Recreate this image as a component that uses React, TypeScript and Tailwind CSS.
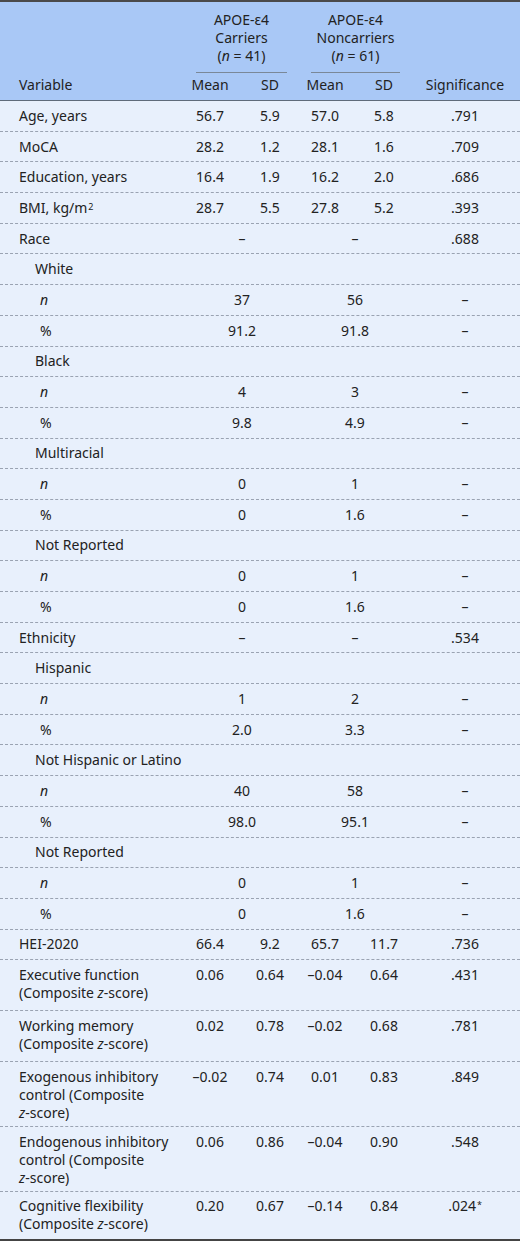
import React from 'react';

type Row = {
  label: React.ReactNode;
  indent?: number;
  lines?: number;
  cells?: [string, string, string, string];
  span?: [string, string];
  sig?: React.ReactNode;
  last?: boolean;
};

const GRID = 'grid grid-cols-[182px_56px_64px_46px_66px_106px]';

const sub = (kind: 'n' | '%', a: string, b: string): Row => ({
  label: kind === 'n' ? <i>n</i> : '%',
  indent: 2,
  span: [a, b],
  sig: '–',
});

const zs = <>(Composite <i>z</i>-score)</>;

const rows: Row[] = [
  { label: 'Age, years', cells: ['56.7', '5.9', '57.0', '5.8'], sig: '.791' },
  { label: 'MoCA', cells: ['28.2', '1.2', '28.1', '1.6'], sig: '.709' },
  { label: 'Education, years', cells: ['16.4', '1.9', '16.2', '2.0'], sig: '.686' },
  {
    label: (
      <>
        BMI, kg/m<sup className="text-[9px] relative -top-[3px] ml-[1px]">2</sup>
      </>
    ),
    cells: ['28.7', '5.5', '27.8', '5.2'],
    sig: '.393',
  },
  { label: 'Race', span: ['–', '–'], sig: '.688' },
  { label: 'White', indent: 1 },
  sub('n', '37', '56'),
  sub('%', '91.2', '91.8'),
  { label: 'Black', indent: 1 },
  sub('n', '4', '3'),
  sub('%', '9.8', '4.9'),
  { label: 'Multiracial', indent: 1 },
  sub('n', '0', '1'),
  sub('%', '0', '1.6'),
  { label: 'Not Reported', indent: 1 },
  sub('n', '0', '1'),
  sub('%', '0', '1.6'),
  { label: 'Ethnicity', span: ['–', '–'], sig: '.534' },
  { label: 'Hispanic', indent: 1 },
  sub('n', '1', '2'),
  sub('%', '2.0', '3.3'),
  { label: 'Not Hispanic or Latino', indent: 1 },
  sub('n', '40', '58'),
  sub('%', '98.0', '95.1'),
  { label: 'Not Reported', indent: 1 },
  sub('n', '0', '1'),
  sub('%', '0', '1.6'),
  { label: 'HEI-2020', cells: ['66.4', '9.2', '65.7', '11.7'], sig: '.736' },
  {
    label: <>Executive function<br />{zs}</>,
    lines: 2,
    cells: ['0.06', '0.64', '–0.04', '0.64'],
    sig: '.431',
  },
  {
    label: <>Working memory<br />{zs}</>,
    lines: 2,
    cells: ['0.02', '0.78', '–0.02', '0.68'],
    sig: '.781',
  },
  {
    label: <>Exogenous inhibitory<br />control (Composite<br /><i>z</i>-score)</>,
    lines: 3,
    cells: ['–0.02', '0.74', '0.01', '0.83'],
    sig: '.849',
  },
  {
    label: <>Endogenous inhibitory<br />control (Composite<br /><i>z</i>-score)</>,
    lines: 3,
    cells: ['0.06', '0.86', '–0.04', '0.90'],
    sig: '.548',
  },
  {
    label: <>Cognitive flexibility<br />{zs}</>,
    cells: ['0.20', '0.67', '–0.14', '0.84'],
    sig: (
      <>
        .024<sup className="text-[9px] relative -top-[3px] ml-[1px]">*</sup>
      </>
    ),
    last: true,
  },
];

function BodyRow({ row }: { row: Row }) {
  const pad = row.indent === 2 ? 'pl-[40px]' : row.indent === 1 ? 'pl-[35px]' : 'pl-[19px]';
  const vpad = row.lines === 2 ? 'pt-[5.85px] pb-[8px]' : row.lines === 3 ? 'pt-[5.85px] pb-[4px]' : 'py-[5.85px]';
  return (
    <div
      className={`${GRID} ${vpad} ${
        row.last ? 'border-b-2 border-[#444]' : 'border-b border-dashed border-[#9aa3b2]'
      }`}
    >
      <div className={`${pad} whitespace-nowrap`}>{row.label}</div>
      {row.cells ? (
        <>
          <div className="text-center">{row.cells[0]}</div>
          <div className="text-center">{row.cells[1]}</div>
          <div className="text-center">{row.cells[2]}</div>
          <div className="text-center pl-[6px]">{row.cells[3]}</div>
        </>
      ) : row.span ? (
        <>
          <div className="col-span-2 text-center">{row.span[0]}</div>
          <div className="col-span-2 text-center pr-[6px]">{row.span[1]}</div>
        </>
      ) : (
        <div className="col-span-4" />
      )}
      <div className="text-center pr-[4px]">{row.sig}</div>
    </div>
  );
}

export default function App() {
  return (
    <div className="min-h-screen bg-white">
      <div
        className="w-[520px] bg-[#e8f0fc] text-[#222] text-[14px] leading-[18px] border-t-2 border-[#4a4a4a]"
        style={{ fontFamily: '"Noto Sans", "Open Sans", sans-serif' }}
      >
        {/* header */}
        <div className="bg-[#a9c8f6] border-b border-[#5f6b7a]">
          <div className={`${GRID} pt-[9px]`}>
            <div />
            <div className="col-span-2 flex flex-col">
              <div className="text-center ml-[14px] mr-[15px]">
                APOE-ε4
                <br />
                Carriers
                <br />(<i>n</i> = 41)
              </div>
              <div className="mt-[7px] ml-[14px] mr-[15px] border-b border-[#7a8898]" />
            </div>
            <div className="col-span-2 flex flex-col">
              <div className="text-center ml-[9px] mr-[14px]">
                APOE-ε4
                <br />
                Noncarriers
                <br />(<i>n</i> = 61)
              </div>
              <div className="mt-[7px] ml-[9px] mr-[14px] border-b border-[#7a8898]" />
            </div>
            <div />
          </div>
          <div className={`${GRID} pt-[3px] pb-[6px]`}>
            <div className="pl-[19px]">Variable</div>
            <div className="text-center">Mean</div>
            <div className="text-center">SD</div>
            <div className="text-center">Mean</div>
            <div className="text-center pl-[6px]">SD</div>
            <div className="text-center pr-[4px]">Significance</div>
          </div>
        </div>
        {rows.map((r, i) => (
          <BodyRow key={i} row={r} />
        ))}
      </div>
    </div>
  );
}
